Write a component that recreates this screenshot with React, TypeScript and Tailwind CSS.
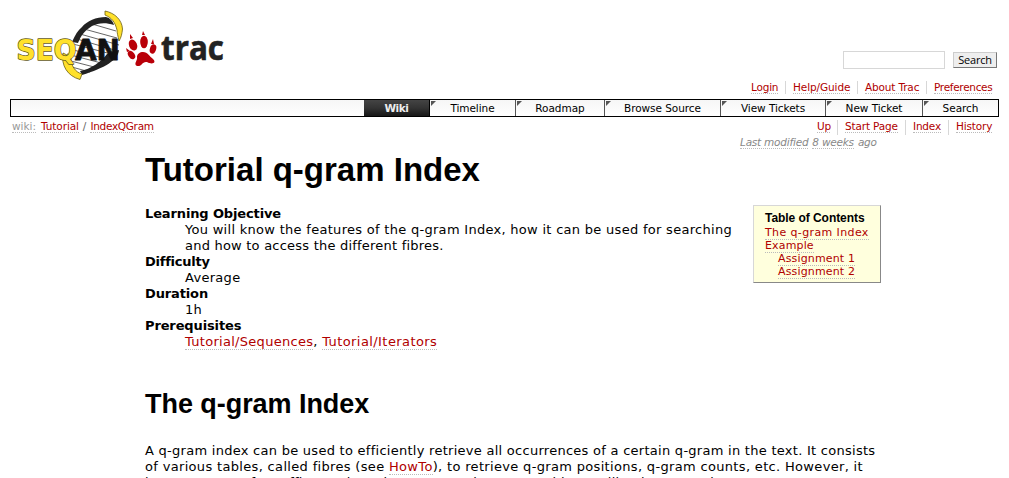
import React from "react";

const link = "text-[#b00000] border-b border-dotted border-[#bbb]";

function Logo() {
  return (
    <svg className="block" width="218" height="74" viewBox="10 8 218 74">
      <path d="M68 55L77 35L93 22L110 20L119 34L117 52L103 64L84 73L72 67Z" fill="#fff" />
      <g stroke="#555" strokeWidth=".9">
        <path d="M84 29L117 38M80 34L119 45M77 39L118 51M73 44L115 55M70 49L110 60M67 54L105 64M67 60L98 68M68 66L90 72M92 24L116 31" />
      </g>
      <path d="M72 42C75 35 78 30 82 27C87 21 96 17 106 17C110 18 113 21 114 25C105 22 98 23 92 26C84 31 81 36 78 43ZM119 50C118 60 105 68 82 75L80 71C91 69 101 62 107 54Z" fill="#222" />
      <path d="M105 11C115 13 122 20 122.500 29C122 34 121 38 119 41C118 36 117 33 117 30C115 22 112 18 105 15ZM63 53C61 65 67 76 80 79.500L82 74C75 72 71 66 71 57Z" fill="#ffe12b" stroke="#6a5d12" strokeWidth=".8" />
      <g fontFamily="DejaVu Sans" fontWeight="700" fontSize="28" strokeLinejoin="round">
        <text x="16.500" y="59.500" fill="#ffe12b" stroke="#63591b" strokeWidth="1.400" paintOrder="stroke" textLength="60" lengthAdjust="spacingAndGlyphs">SEQ</text>
        <text x="75" y="59.500" fill="#111" stroke="#111" strokeWidth=".8" textLength="45" lengthAdjust="spacingAndGlyphs">AN</text>
      </g>
      <g fill="#b90009">
        <ellipse cx="133" cy="45" rx="4" ry="5.700" transform="rotate(-22 133 45)" />
        <ellipse cx="144" cy="42" rx="3.800" ry="6.300" />
        <ellipse cx="153" cy="49" rx="3.100" ry="4.700" transform="rotate(18 153 49)" />
        <ellipse cx="131.500" cy="55" rx="3.100" ry="4.600" transform="rotate(-35 131.500 55)" />
        <path d="M143 52C148 52 149 56 153 59C157 63 152 65 147 62C142 61 142 67 137 66C133 64 138 60 137 57C137 54 140 52 143 52ZM130 34L133 38L130 39ZM143 31L145 35L142 35ZM153 39L154 44L151 44ZM126 48L130 51L127 52Z" />
      </g>
      <text x="161" y="60" fontFamily="Open Sans" fontWeight="700" fontSize="34" fill="#222" stroke="#222" strokeWidth=".6" textLength="63" lengthAdjust="spacingAndGlyphs">trac</text>
    </svg>
  );
}

function MetaLinks({ items }: { items: { text: string; cls: string }[] }) {
  return (
    <ul className="flex justify-end text-[10.500px] leading-[12px]">
      {items.map((item, i) => (
        <li key={item.text} className={i ? "ml-[7px] border-l border-[#d7d7d7] pl-[7px]" : ""}>
          <a className={`block whitespace-nowrap ${link} ${item.cls}`}>{item.text}</a>
        </li>
      ))}
    </ul>
  );
}

const tabs = [
  { text: "Timeline", cls: "w-[85px]" },
  { text: "Roadmap", cls: "w-[89px]" },
  { text: "Browse Source", cls: "w-[116px]" },
  { text: "View Tickets", cls: "w-[105px]" },
  { text: "New Ticket", cls: "w-[97px]" },
  { text: "Search", cls: "w-[76px]" },
];

export default function App() {
  return (
    <div className="h-[478px] w-[1009px] overflow-hidden bg-white font-['DejaVu_Sans',sans-serif] text-black">
      <header className="flex h-[81px] justify-between pl-[10px] pt-2 pr-3">
        <Logo />
        <div className="flex items-start gap-2 pt-[43px]">
          <input aria-label="Query" className="h-[18px] w-[102px] border border-[#d7d7d7] bg-white outline-none" />
          <button className="mt-px h-4 w-11 border border-[#ccc] border-r-[#777] border-b-[#777] bg-[#eee] font-['Open_Sans',sans-serif] text-[11px] leading-[14px] tracking-[-0.200px]">Search</button>
        </div>
      </header>
      <div className="h-[18px] pr-[17px]">
        <MetaLinks items={[
          { text: "Login", cls: "w-[27px] tracking-[-0.200px]" }, { text: "Help/Guide", cls: "w-[57px] tracking-[-0.100px]" },
          { text: "About Trac", cls: "w-[54px] tracking-[-0.150px]" }, { text: "Preferences", cls: "w-[58px] tracking-[-0.300px]" },
        ]} />
      </div>
      <nav className="mr-[10px] ml-[10px] flex h-[18px] justify-end border border-black bg-linear-to-b from-[#f6f6f6] to-white text-[10.500px] leading-[16px]">
        <span className="w-[66px] border-r border-black bg-linear-to-b from-[#444] via-[#333] to-[#171717] text-center font-bold tracking-[-0.400px] text-[#eee]">Wiki</span>
        {tabs.map((tab, i) => (
          <a key={tab.text} className={`relative text-center tracking-[-0.050px] whitespace-nowrap ${i ? "border-l border-[#555]" : ""} ${tab.cls}`}>
            <svg className="absolute top-[1px] left-[1px]" width="5" height="5"><path d="M0 0H5L0 5Z" fill="#555" /></svg>
            {tab.text}
          </a>
        ))}
      </nav>
      <div className="flex h-[18px] justify-between pt-[3px] pr-[17px] pl-3 text-[10.500px] leading-[12px]">
        <div className="flex">
          <a className="mr-[5px] h-[13px] border-b border-dotted border-[#bbb] text-[#999]">wiki:</a>
          <a className={`h-[13px] tracking-[-0.100px] ${link}`}>Tutorial</a>
          <span className="mx-1 text-[#666]">/</span>
          <a className={`h-[13px] tracking-[-0.300px] ${link}`}>IndexQGram</a>
        </div>
        <MetaLinks items={[
          { text: "Up", cls: "w-[13px] tracking-[-0.300px]" }, { text: "Start Page", cls: "w-[53px] tracking-[-0.150px]" },
          { text: "Index", cls: "w-[28px] tracking-[-0.200px]" }, { text: "History", cls: "w-[36px] tracking-[-0.150px]" },
        ]} />
      </div>
      <div className="flex h-4 gap-1 pt-px pl-[740px] text-[10.500px] leading-[12px] tracking-[-0.220px] text-[#888] italic">
        <span className="h-[13px] border-b border-dotted border-[#bbb]">Last modified</span>
        <span className="h-[13px] border-b border-dotted border-[#bbb]">8 weeks</span>
        <span>ago</span>
      </div>
      <main className="pl-[145px] text-[13px] leading-[16px]">
        <h1 className="h-[54px] pt-px font-['Liberation_Sans',sans-serif] text-[33px] leading-[36px] font-bold whitespace-nowrap">Tutorial q-gram Index</h1>
        <div className="flex h-[183px] items-start">
          <dl className="w-[608px] pt-px tracking-[0.290px] whitespace-nowrap">
            <dt className="font-bold tracking-[-0.130px]">Learning Objective</dt>
            <dd className="pl-10">You will know the features of the q-gram Index, how it can be used for searching<br /><span className="tracking-[0.220px]">and how to access the different fibres.</span></dd>
            <dt className="font-bold tracking-[-0.250px]">Difficulty</dt>
            <dd className="pl-10">Average</dd>
            <dt className="font-bold tracking-[-0.130px]">Duration</dt>
            <dd className="pl-10">1h</dd>
            <dt className="font-bold tracking-[-0.130px]">Prerequisites</dt>
            <dd className="pl-10"><a className={link}>Tutorial/Sequences</a>, <a className={`tracking-[0.420px] ${link}`}>Tutorial/Iterators</a></dd>
          </dl>
          <aside className="h-[78px] w-[128px] border border-[#d7d7d7] border-r-[#888] border-b-[#888] bg-[#ffffdd] pt-[5px] pl-[11px] text-[11px] leading-[13px] whitespace-nowrap">
            <h4 className="h-[15px] font-['Liberation_Sans',sans-serif] text-[12px] leading-[14px] font-bold tracking-[-0.050px]">Table of Contents</h4>
            <ul>
              <li className="tracking-[0.380px]"><a className={link}>The q-gram Index</a></li>
              <li className="tracking-[0.150px]"><a className={link}>Example</a></li>
              <li className="pl-[13px] tracking-[0.150px]"><a className={link}>Assignment 1</a></li>
              <li className="pl-[13px] tracking-[0.150px]"><a className={link}>Assignment 2</a></li>
            </ul>
          </aside>
        </div>
        <h2 className="h-[55px] font-['Liberation_Sans',sans-serif] text-[27px] leading-[32px] font-bold tracking-[-0.050px] whitespace-nowrap">The q-gram Index</h2>
        <p className="tracking-[0.270px] whitespace-nowrap">A q-gram index can be used to efficiently retrieve all occurrences of a certain q-gram in the text. It consists<br /><span className="tracking-[0.330px]">of various tables, called fibres (see <a className={link}>HowTo</a>), to retrieve q-gram positions, q-gram counts, etc. However, it</span><br />has no support for suffix tree iteration or approximate searching, unlike the ESA Index.</p>
      </main>
    </div>
  );
}
